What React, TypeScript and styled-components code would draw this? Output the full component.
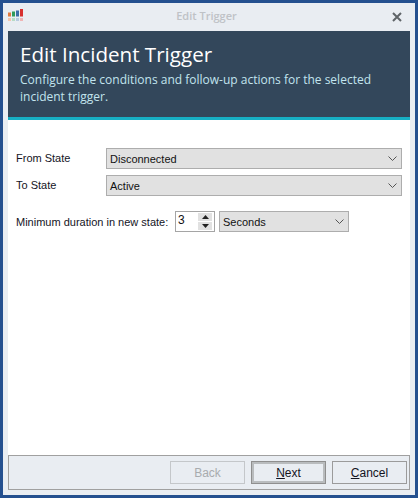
import React from "react";
import styled, { createGlobalStyle } from "styled-components";

const Global = createGlobalStyle`
  html, body { margin: 0; padding: 0; width: 418px; height: 498px; overflow: hidden; }
  #root { width: 418px; height: 498px; }
  * { box-sizing: border-box; }
`;

const Window = styled.div`
  width: 418px;
  height: 498px;
  border: 3px solid #24508f;
  background: #e9edf2;
  display: flex;
  flex-direction: column;
  font-family: "Liberation Sans", Arial, sans-serif;
  font-size: 11px;
  color: #14141e;
`;

const TitleBar = styled.div`
  height: 28px;
  flex: none;
  display: grid;
  grid-template-columns: 40px 1fr 40px;
  align-items: center;
  padding: 0 5px 3px;
`;

const WindowTitle = styled.div`
  text-align: center;
  font-family: "Open Sans", sans-serif;
  font-size: 11px;
  font-weight: 600;
  color: #bfc2c6;
  margin-left: -5px;
`;

const CloseButton = styled.div`
  justify-self: end;
  display: flex;
  margin-right: 8px;
  margin-top: 3px;
`;

const Body = styled.div`
  flex: 1;
  margin: 0 5px 5px;
  background: #fff;
  display: flex;
  flex-direction: column;
`;

const Banner = styled.div`
  height: 89px;
  flex: none;
  background: #33475b;
  border-bottom: 3px solid #17afc4;
  padding: 10px 12px 0;
`;

const Heading = styled.h1`
  margin: 0;
  font-family: "Open Sans", sans-serif;
  font-weight: 400;
  font-size: 20.6px;
  line-height: 26px;
  color: #fff;
`;

const Subheading = styled.p`
  margin: 4px 0 0;
  font-family: "Open Sans", sans-serif;
  font-size: 12px;
  line-height: 17px;
  color: #c2e4ee;
`;

const Form = styled.div`
  flex: 1;
  padding: 28px 8px 0;
  display: flex;
  flex-direction: column;
`;

const Row = styled.div<{ $mt?: number }>`
  display: flex;
  align-items: center;
  height: 21px;
  margin-top: ${(p) => p.$mt ?? 0}px;
`;

const StateLabel = styled.span`
  width: 90px;
  flex: none;
  margin-bottom: 2px;
`;

const DurationLabel = styled.span`
  width: 159px;
  flex: none;
  white-space: nowrap;
`;

const Select = styled.div<{ $w?: number }>`
  height: 21px;
  width: ${(p) => (p.$w ? `${p.$w}px` : "auto")};
  flex: ${(p) => (p.$w ? "none" : "1")};
  background: #e1e1e1;
  border: 1px solid #adadad;
  display: flex;
  align-items: center;
  justify-content: space-between;
  padding: 0 4px 0 3px;
  color: #111;
`;

const Spinner = styled.div`
  width: 40px;
  height: 21px;
  flex: none;
  margin-right: 4px;
  background: #fff;
  border: 1px solid #a5a5a5;
  display: flex;
  justify-content: space-between;
  padding: 1px 2px 1px 2px;
  font-size: 12px;
  color: #111;
`;

const SpinButtons = styled.div`
  width: 14px;
  display: flex;
  flex-direction: column;
  gap: 1px;
`;

const SpinButton = styled.div`
  flex: 1;
  background: #e1e1e1;
  display: flex;
  align-items: center;
  justify-content: center;
`;

const Footer = styled.div`
  height: 35px;
  flex: none;
  background: #e9edf2;
  border: 1px solid #a0a0a0;
  display: flex;
  justify-content: flex-end;
  align-items: center;
  gap: 6px;
  padding: 0 2px 0 0;
`;

const Button = styled.button<{ $variant?: "default" | "disabled" }>`
  width: 75px;
  height: 23px;
  padding: 0;
  background: #e9edf2;
  font: inherit;
  font-size: 12px;
  color: ${(p) => (p.$variant === "disabled" ? "#a8abae" : "#14141e")};
  border: 1px solid
    ${(p) =>
      p.$variant === "default" ? "#8f8f8f" : p.$variant === "disabled" ? "#c4c7ca" : "#9b9b9b"};
  box-shadow: ${(p) => (p.$variant === "default" ? "inset 0 0 0 2px #b9bcbe" : "none")};
  & u { text-underline-offset: 1px; }
`;

const Chevron = () => (
  <svg width="9" height="5" viewBox="0 0 9 5" fill="none">
    <path d="M.5.5 4.500 4.500 8.500.5" stroke="#555" strokeWidth="1" />
  </svg>
);

const Logo = () => (
  <svg width="16" height="14" viewBox="0 0 16 14">
    <rect x="0" y="3.500" width="3" height="4" fill="#e0793f" />
    <rect x="4" y="2.500" width="3" height="5" fill="#2f9a5a" />
    <rect x="8" y="1.500" width="3" height="6" fill="#3b6ea8" />
    <rect x="12" y="0" width="3" height="7.500" fill="#d8302f" />
    <rect x="0" y="9" width="3" height="3" fill="#f3c6ae" />
    <rect x="4" y="9" width="3" height="3" fill="#b5dcc5" />
    <rect x="8" y="9" width="3" height="3" fill="#b8cbe0" />
    <rect x="12" y="9" width="3" height="3" fill="#f0b4b4" />
  </svg>
);

const Arrow = ({ up }: { up?: boolean }) => (
  <svg width="7" height="4" viewBox="0 0 7 4">
    <path d={up ? "M3.500 0 7 4H0z" : "M0 0h7L3.500 4z"} fill="#222" />
  </svg>
);

export default function App() {
  return (
    <Window>
      <Global />
      <TitleBar>
        <Logo />
        <WindowTitle>Edit Trigger</WindowTitle>
        <CloseButton>
          <svg width="10" height="10" viewBox="0 0 10 10">
            <path d="M1 1l8 8M9 1l-8 8" stroke="#5f6468" strokeWidth="2" />
          </svg>
        </CloseButton>
      </TitleBar>
      <Body>
        <Banner>
          <Heading>Edit Incident Trigger</Heading>
          <Subheading>
            Configure the conditions and follow-up actions for the selected incident trigger.
          </Subheading>
        </Banner>
        <Form>
          <Row>
            <StateLabel>From State</StateLabel>
            <Select>Disconnected<Chevron /></Select>
          </Row>
          <Row $mt={6}>
            <StateLabel>To State</StateLabel>
            <Select>Active<Chevron /></Select>
          </Row>
          <Row $mt={15}>
            <DurationLabel>Minimum duration in new state:</DurationLabel>
            <Spinner>
              3
              <SpinButtons>
                <SpinButton><Arrow up /></SpinButton>
                <SpinButton><Arrow /></SpinButton>
              </SpinButtons>
            </Spinner>
            <Select $w={130}>Seconds<Chevron /></Select>
          </Row>
        </Form>
        <Footer>
          <Button $variant="disabled">Back</Button>
          <Button $variant="default"><u>N</u>ext</Button>
          <Button><u>C</u>ancel</Button>
        </Footer>
      </Body>
    </Window>
  );
}
